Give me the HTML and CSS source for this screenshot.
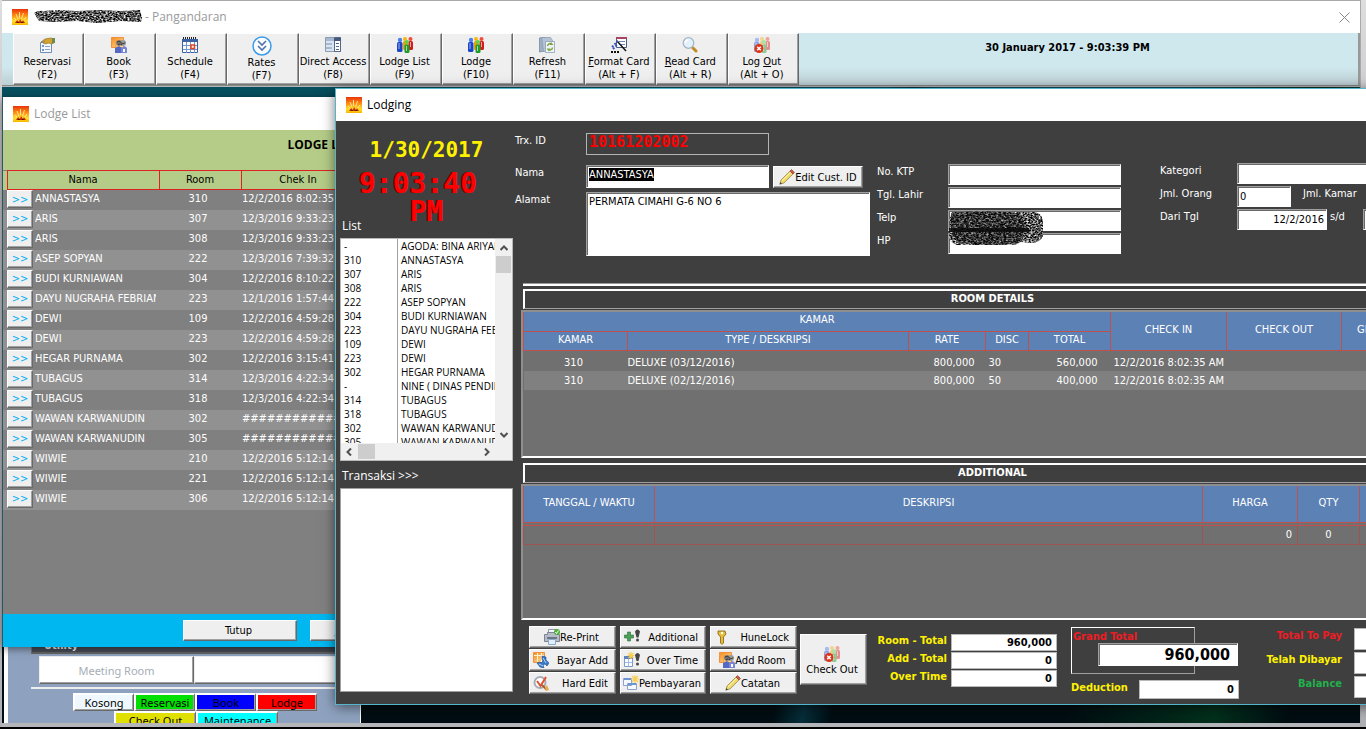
FILE: index.html
```html
<!DOCTYPE html>
<html lang="id">
<head>
<meta charset="utf-8">
<title>Pangandaran - Lodging</title>
<link rel="stylesheet" href="styles.css">
</head>
<body>
<svg class="defs" aria-hidden="true">
  <defs>
    <linearGradient id="fire" x1="0" y1="0" x2="0" y2="1"><stop offset="0" stop-color="#e8330c"/><stop offset=".4" stop-color="#ff8a10"/><stop offset=".75" stop-color="#ffe02a"/><stop offset="1" stop-color="#f8b400"/></linearGradient>
    <linearGradient id="blue" x1="0" y1="0" x2="1" y2="1"><stop offset="0" stop-color="#b8d0ee"/><stop offset="1" stop-color="#3b64ad"/></linearGradient>
    <linearGradient id="orange" x1="0" y1="0" x2="1" y2="1"><stop offset="0" stop-color="#f58a1c"/><stop offset="1" stop-color="#ffe0a0"/></linearGradient>
    <filter id="noise" x="0" y="0" width="1" height="1" color-interpolation-filters="sRGB">
      <feTurbulence type="fractalNoise" baseFrequency=".5 .7" numOctaves="3" seed="7"/>
      <feColorMatrix type="matrix" values="2.2 0 0 0 -.75  2.2 0 0 0 -.75  2.2 0 0 0 -.75  0 0 0 0 1"/>
      <feComposite in2="SourceGraphic" operator="in"/>
    </filter>
    <filter id="noise-dark" x="0" y="0" width="1" height="1" color-interpolation-filters="sRGB">
      <feTurbulence type="fractalNoise" baseFrequency=".4 .7" numOctaves="3" seed="3"/>
      <feColorMatrix type="matrix" values="1.6 0 0 0 -.62  1.6 0 0 0 -.62  1.6 0 0 0 -.62  0 0 0 0 1"/>
      <feComposite in2="SourceGraphic" operator="in"/>
    </filter>
    <symbol id="i-app" viewBox="0 0 16 16"><path fill="url(#fire)" d="M0 0h16v16H0z"/><path stroke="#fff6b0" stroke-width=".8" d="M7.5 3v6M4 5l2 5M11.500 4l-2 6M2 9l3 3M14 8l-3 4"/><path fill="#c22a00" d="M3 14l2-3 2 2 1-3 2 3 1-2 2 3z"/><path fill="#651a00" d="M5 13h2v1H5zM9 13h2v1H9z"/></symbol>
    <symbol id="i-reserve" viewBox="0 0 16 16"><path fill="#f4f8fd" stroke="#6d8db8" d="M1.500 5.500h11v10h-11z"/><path fill="#6d93cc" d="M3 8h2v2H3zM3 12h2v2H3z"/><path stroke="#8aa2c4" d="M6 9.500h5M6 12.500h5"/><path fill="#d5a32b" stroke="#8d7a3a" stroke-width=".7" d="M2 5l4-3 6-1 3 1v4l-3 1-2-1-4 1-2-1 2-2z"/><path fill="#6e8a50" d="M13 1h3v5h-3z"/></symbol>
    <symbol id="i-book" viewBox="0 0 16 16"><path fill="url(#orange)" stroke="#f09038" d="M.5.5h12v10H.5z"/><path stroke="#f7a040" d="M0 3.500h13M4.500 1v10"/><circle cx="8" cy="6" r="2.800" fill="#777"/><circle cx="12" cy="6" r="3" fill="#9a9a9a"/><path fill="none" stroke="#3d3d3d" stroke-width="1.100" d="M6 5.500q2-2.500 4 0t4 0M7 8q2-2 4 0"/><path fill="#5468c4" d="M4 11l4-2 3 2v5H4z"/><path fill="#7686da" d="M10 11l4-2 2 2v5h-6z"/><path fill="#fff" d="M12 12h2v3h-2z"/></symbol>
    <symbol id="i-calendar" viewBox="0 0 16 16"><path fill="#fff" stroke="#3c62a3" d="M.5 2.500h15v13H.5z"/><path fill="#3c62a3" d="M0 2h16v3H0z"/><path stroke="#222" stroke-dasharray="1 1" stroke-width="2" d="M1 1h14"/><path stroke="#7095d0" d="M1 8.500h14M1 12.500h14M4.500 5v11M8.500 5v11M12.500 5v11"/><path fill="#fff" stroke="#e2451e" stroke-width="1.500" d="M9 8h3.500v3.500H9z"/></symbol>
    <symbol id="i-rates" viewBox="0 0 20 20"><circle cx="10" cy="10" r="9" fill="#fafdff" stroke="#3b9ae8" stroke-width="1.500"/><path fill="none" stroke="#5272ad" stroke-width="1.600" d="M6 5l4 4 4-4M6 10l4 4 4-4"/></symbol>
    <symbol id="i-direct" viewBox="0 0 16 16"><path fill="#d9e4f3" stroke="#8c9bb0" d="M.5.5h15v14H.5z"/><path fill="#a9b9d0" d="M1 1h8v3H1zM1 6h6v2H1zM1 10h6v2H1z"/><path fill="#fff" stroke="#51688a" d="M9.500.5h6v14h-6z"/><path fill="#44597c" d="M9 1h7v3H9z"/><path stroke="#51688a" d="M11 6.500h3M11 9.500h3M11 12.500h3"/></symbol>
    <symbol id="i-people" viewBox="0 0 16 16"><circle cx="8" cy="2" r="2" fill="#f6b610"/><rect x="6" y="4" width="4.500" height="9" rx="1.500" fill="#f0a000"/><circle cx="13.500" cy="2" r="2" fill="#f04c3c"/><rect x="11.500" y="4" width="4.500" height="9" rx="1.500" fill="#d51c1c"/><circle cx="3" cy="3" r="2.200" fill="#4f80f0"/><rect x="0" y="5" width="5.500" height="10" rx="1.500" fill="#1c46c8"/><circle cx="10" cy="5" r="2.100" fill="#5bd24c"/><rect x="7.500" y="7.500" width="5" height="8.500" rx="1.500" fill="#1e9b2a"/><path stroke="#fff" stroke-opacity=".6" d="M2 6v6M9.500 9v5M13.500 5v5"/></symbol>
    <symbol id="i-leave" viewBox="0 0 16 16"><g opacity=".45"><use href="#i-people"/></g><circle cx="5" cy="11.500" r="4.500" fill="#dd3518"/><path stroke="#fff" stroke-width="1.500" d="M3.200 9.700l3.600 3.600M6.800 9.700l-3.600 3.600"/></symbol>
    <symbol id="i-refresh" viewBox="0 0 16 16"><path fill="#9fb0c4" stroke="#6a7f99" stroke-width=".7" d="M.5 1l5-1v14l-5 1z"/><path fill="#b4c2d2" stroke="#8498b0" stroke-width=".7" d="M2.500.5h9l2 3v11h-9z"/><path fill="#eef3f8" stroke="#8498b0" stroke-width=".7" d="M6.500 4.500h9v11h-9z"/><path fill="none" stroke="#7fa53a" stroke-width="1.400" d="M8.500 9a2.500 2.500 0 014-2M13.500 10.500a2.500 2.500 0 01-4 2"/><path fill="#7fa53a" d="M12 5l2.500 3h-4zM10 14.500l-2.500-3h4z"/></symbol>
    <symbol id="i-format" viewBox="0 0 16 16"><path fill="#fff" stroke="#4d5d86" d="M5.500.5h10v10h-10z"/><path fill="#a84466" d="M5 0h11v2H5z"/><path stroke="#7488b3" d="M8 4.500h6M10 7.500h4"/><path stroke="#111" stroke-width="1.500" d="M6 4l9 10"/><path stroke="#3d57ba" stroke-width="2" stroke-dasharray="2 1.500" d="M1 10l6-6M2 12l4-4"/><path stroke="#111" stroke-width="2" stroke-dasharray="2 1" d="M0 15h9"/></symbol>
    <symbol id="i-lens" viewBox="0 0 16 16"><path stroke="#c08a24" stroke-width="3" stroke-linecap="round" d="M11 11l3 3"/><circle cx="6.500" cy="6" r="5.300" fill="#e2f1fb" stroke="#a3b4c3" stroke-width="1.200"/><path fill="none" stroke="#fff" stroke-width="1.500" d="M3.500 6a3 3 0 013-3"/></symbol>
    <symbol id="i-pencil" viewBox="0 0 16 16"><path fill="#efd768" stroke="#8d8048" stroke-width=".7" d="M1 15l1-4L11 2l3 3-9 9z"/><path stroke="#fff6b5" d="M3 12l8.500-8.500"/><path fill="#cf5650" stroke="#8a3530" stroke-width=".6" d="M11 2l1.500-1.500 3 3L14 5z"/><path fill="#444" d="M.5 15.500l.8-2.500 1.700 1.700z"/></symbol>
    <symbol id="i-print" viewBox="0 0 16 16"><path fill="#f5f7fa" stroke="#8d97a8" d="M4.500.5h8v6h-8z"/><path fill="#b5bcc8" stroke="#7d8592" d="M.5 5.500h3v-2h10v2h2v7H.5z"/><path fill="#6d7685" d="M3 8h10v2H3z"/><path fill="#e2eefb" stroke="#8caacb" d="M4.500 10.500h7v5h-7z"/><circle cx="13" cy="3" r="3" fill="#4fae3c"/><path fill="none" stroke="#fff" d="M11.500 3l1 1.500 2-3"/></symbol>
    <symbol id="i-addnote" viewBox="0 0 16 16"><path fill="#4aa15a" stroke="#2c6b38" stroke-width=".6" d="M3.500 3h3v3h3v3h-3v3h-3V9H.5V6h3z"/><path fill="#444" d="M11 2.500q2.500-4 5 0l-1.500 6h-2z"/><circle cx="13.500" cy="11" r="1.500" fill="#444"/></symbol>
    <symbol id="i-over" viewBox="0 0 16 16"><path fill="#fff" stroke="#7d9bcc" d="M.5 4.500h8v10h-8z"/><path fill="#5f83bd" d="M0 4h9v3H0z"/><path stroke="#9fbae4" d="M1 10.500h7M4.500 7v7"/><path stroke="#f6cf50" stroke-width="1.200" d="M7 0v7M3.500 3.500h7M4.500 1l5 5M9.500 1l-5 5"/><path fill="#444" d="M11 3q2.500-4 5 0l-1.500 6h-2z"/><circle cx="13.500" cy="12" r="1.500" fill="#444"/></symbol>
    <symbol id="i-key" viewBox="0 0 16 16"><path fill="#e8bd35" stroke="#7e5f11" stroke-width=".8" d="M4 2h7l1 3-2.500 3v6L8 15.500 6.500 14V8L4 5z"/><circle cx="8" cy="4" r="1.200" fill="#fff"/></symbol>
    <symbol id="i-pay" viewBox="0 0 16 16"><path fill="url(#orange)" stroke="#f09038" d="M.5.5h11v10H.5z"/><path stroke="#fff3d5" d="M4.500 1v9M8.500 1v9M1 3.500h10"/><path fill="#3979c9" stroke="#1d4f97" stroke-width=".6" d="M9 4l4 1v3l3 3-2 3-2-2-2 1 1 3-4-1-3-4 3-1 1 1 2-2-1-2z"/><path stroke="#b7d5f5" d="M10 6l3 5M6 12l4 2"/></symbol>
    <symbol id="i-edit" viewBox="0 0 16 16"><circle cx="7" cy="7.500" r="5.500" fill="#fff" stroke="#a7adb6" stroke-width="2"/><path fill="none" stroke="#e05132" stroke-width="2" d="M4 6l3.500 5L13 2"/><path stroke="#a85f24" stroke-width="2" d="M9 10l5 5"/><path fill="#e9ad55" d="M12 12l2-2 2 5-3 1z"/></symbol>
    <symbol id="i-cash" viewBox="0 0 16 16"><path fill="#f5faff" stroke="#8ba3cd" d="M.5 3.500h8v7h-8zM4.500 8.500h9v6h-9z"/><path stroke="#6f94d5" stroke-width="2" d="M1 4h7M5 9h8"/><path stroke="#f6cf50" stroke-width="1.200" d="M12 0v8M8 4h8M9 1l6 6M15 1L9 7"/></symbol>
    <symbol id="i-close" viewBox="0 0 11 11"><path stroke="#888" d="M.5.5l10 10M10.500.5l-10 10"/></symbol>
    <symbol id="i-chev" viewBox="0 0 8 6"><path fill="none" stroke="#505050" stroke-width="2" d="M.5 5L4 1.500 7.500 5"/></symbol>
  </defs>
</svg>

<div class="desktop">
  <div class="behind"></div>

  <section class="main-window">
    <header class="titlebar titlebar-main">
      <svg class="app-icon"><use href="#i-app"/></svg>
      <svg class="redact"><path filter="url(#noise)" d="M0 4q4-3 10-2l12-1 20 1 24-1 20 1 20-1 2 8-1 4-20-1-24 2-20-2-24 1-14-1z"/></svg>
      <span>- Pangandaran</span>
      <button class="close" aria-label="Close"><svg><use href="#i-close"/></svg></button>
    </header>
    <div class="toolbar">
      <nav class="tools">
        <button><svg><use href="#i-reserve"/></svg>Reservasi<br>(F2)</button>
        <button><svg><use href="#i-book"/></svg>Book<br>(F3)</button>
        <button><svg><use href="#i-calendar"/></svg>Schedule<br>(F4)</button>
        <button><svg class="large"><use href="#i-rates"/></svg>Rates<br>(F7)</button>
        <button><svg><use href="#i-direct"/></svg>Direct Access<br>(F8)</button>
        <button><svg><use href="#i-people"/></svg>Lodge List<br>(F9)</button>
        <button><svg><use href="#i-people"/></svg>Lodge<br>(F10)</button>
        <button><svg><use href="#i-refresh"/></svg>Refresh<br>(F11)</button>
        <button><svg><use href="#i-format"/></svg><u>F</u>ormat Card<br>(Alt + F)</button>
        <button><svg><use href="#i-lens"/></svg><u>R</u>ead Card<br>(Alt + R)</button>
        <button><svg><use href="#i-leave"/></svg>Log <u>O</u>ut<br>(Alt + O)</button>
      </nav>
      <div class="now">30 January 2017 - 9:03:39 PM</div>
    </div>
    <div class="mdi"></div>
  </section>

  <section class="room-map">
    <div class="map-inner">
      <div class="map-head">Utility</div>
      <div class="meeting"><button disabled>Meeting Room</button><button aria-label="Empty room"></button></div>
      <div class="legend">
        <button class="kosong">Kosong</button><button class="reservasi">Reservasi</button><button class="book">Book</button><button class="lodge">Lodge</button>
      </div>
      <div class="legend legend-two">
        <button class="checkout">Check Out</button><button class="maint">Maintenance</button>
      </div>
    </div>
  </section>

  <section class="lodge-list">
    <header class="titlebar"><svg class="app-icon"><use href="#i-app"/></svg><span>Lodge List</span></header>
    <div class="list-body">
      <h1>LODGE LIST</h1>
      <table>
        <colgroup><col class="c-edge"><col class="c-go"><col class="c-name"><col class="c-room"><col class="c-in"><col></colgroup>
        <thead><tr><td></td><th colspan="2">Nama</th><th>Room</th><th>Chek In</th><th></th></tr></thead>
        <tbody>
          <tr><td></td><td><button>&gt;&gt;</button></td><td><div>ANNASTASYA</div></td><td>310</td><td>12/2/2016 8:02:35</td><td></td></tr>
          <tr><td></td><td><button>&gt;&gt;</button></td><td><div>ARIS</div></td><td>307</td><td>12/3/2016 9:33:23</td><td></td></tr>
          <tr><td></td><td><button>&gt;&gt;</button></td><td><div>ARIS</div></td><td>308</td><td>12/3/2016 9:33:23</td><td></td></tr>
          <tr><td></td><td><button>&gt;&gt;</button></td><td><div>ASEP SOPYAN</div></td><td>222</td><td>12/3/2016 7:39:32</td><td></td></tr>
          <tr><td></td><td><button>&gt;&gt;</button></td><td><div>BUDI KURNIAWAN</div></td><td>304</td><td>12/2/2016 8:10:22</td><td></td></tr>
          <tr><td></td><td><button>&gt;&gt;</button></td><td><div>DAYU NUGRAHA FEBRIAN</div></td><td>223</td><td>12/1/2016 1:57:44</td><td></td></tr>
          <tr><td></td><td><button>&gt;&gt;</button></td><td><div>DEWI</div></td><td>109</td><td>12/2/2016 4:59:28</td><td></td></tr>
          <tr><td></td><td><button>&gt;&gt;</button></td><td><div>DEWI</div></td><td>223</td><td>12/2/2016 4:59:28</td><td></td></tr>
          <tr><td></td><td><button>&gt;&gt;</button></td><td><div>HEGAR PURNAMA</div></td><td>302</td><td>12/2/2016 3:15:41</td><td></td></tr>
          <tr><td></td><td><button>&gt;&gt;</button></td><td><div>TUBAGUS</div></td><td>314</td><td>12/3/2016 4:22:34</td><td></td></tr>
          <tr><td></td><td><button>&gt;&gt;</button></td><td><div>TUBAGUS</div></td><td>318</td><td>12/3/2016 4:22:34</td><td></td></tr>
          <tr><td></td><td><button>&gt;&gt;</button></td><td><div>WAWAN KARWANUDIN</div></td><td>302</td><td>############</td><td></td></tr>
          <tr><td></td><td><button>&gt;&gt;</button></td><td><div>WAWAN KARWANUDIN</div></td><td>305</td><td>############</td><td></td></tr>
          <tr><td></td><td><button>&gt;&gt;</button></td><td><div>WIWIE</div></td><td>210</td><td>12/2/2016 5:12:14</td><td></td></tr>
          <tr><td></td><td><button>&gt;&gt;</button></td><td><div>WIWIE</div></td><td>221</td><td>12/2/2016 5:12:14</td><td></td></tr>
          <tr><td></td><td><button>&gt;&gt;</button></td><td><div>WIWIE</div></td><td>306</td><td>12/2/2016 5:12:14</td><td></td></tr>
        </tbody>
      </table>
    </div>
    <footer><button>Tutup</button><button aria-label="Edit"><svg class="ico"><use href="#i-pencil"/></svg></button></footer>
  </section>

  <section class="lodging">
    <header class="titlebar"><svg class="app-icon"><use href="#i-app"/></svg><span>Lodging</span></header>
    <div class="lodging-body">
      <aside>
        <div class="clock"><div class="date">1/30/2017</div><div class="time">9:03:40</div><div class="time ampm">PM</div></div>
        <div class="caption">List</div>
        <div class="listbox">
          <div class="entries">
            <ul class="rooms"><li>-<li>310<li>307<li>308<li>222<li>304<li>223<li>109<li>223<li>302<li>-<li>314<li>318<li>302<li>305</ul>
            <ul class="names"><li>AGODA: BINA ARIYANTO<li>ANNASTASYA<li>ARIS<li>ARIS<li>ASEP SOPYAN<li>BUDI KURNIAWAN<li>DAYU NUGRAHA FEBRIAN<li>DEWI<li>DEWI<li>HEGAR PURNAMA<li>NINE ( DINAS PENDIDIKAN<li>TUBAGUS<li>TUBAGUS<li>WAWAN KARWANUDIN<li>WAWAN KARWANUDIN</ul>
            <div class="vbar"><svg><use href="#i-chev"/></svg><i></i><svg class="down"><use href="#i-chev"/></svg></div>
          </div>
          <div class="hbar"><svg class="left"><use href="#i-chev"/></svg><i></i><svg class="right"><use href="#i-chev"/></svg></div>
        </div>
        <div class="caption transaksi">Transaksi &gt;&gt;&gt;</div>
        <div class="transbox"></div>
      </aside>

      <main>
        <form class="guest">
          <div class="who">
            <label for="trx">Trx. ID</label><input id="trx" class="trx" value="10161202002" readonly>
            <label for="nama">Nama</label><div class="field"><span class="selected">ANNASTASYA</span><input id="nama" aria-label="Nama"></div>
            <button type="button"><svg class="ico"><use href="#i-pencil"/></svg>Edit Cust. ID</button>
            <label for="alamat">Alamat</label><textarea id="alamat">PERMATA CIMAHI G-6 NO 6</textarea>
          </div>
          <div class="contact">
            <label for="ktp">No. KTP</label><input id="ktp">
            <label for="lahir">Tgl. Lahir</label><input id="lahir">
            <label for="telp">Telp</label><input id="telp">
            <label for="hp">HP</label><input id="hp">
            <svg class="smudge" viewBox="0 0 94 36"><path filter="url(#noise)" d="M3 2h82q8 1 9 9v15q-3 7-12 7l-10-1-6 3H8q-8-3-8-9l2-7-2-8z"/><path filter="url(#noise-dark)" opacity=".85" d="M2 3q35-4 70 1l4 15-6 14q-34 4-62-1l-6-12z"/><path stroke="#0a0a0a" stroke-width="4" opacity=".85" d="M0 20h80"/></svg>
          </div>
          <div class="stay">
            <label for="kat">Kategori</label><div><input id="kat" class="wide"></div>
            <label for="orang">Jml. Orang</label><div><input id="orang" class="short" value="0"><label class="kamar" for="jkamar">Jml. Kamar</label><input id="jkamar" class="short"></div>
            <label for="dari">Dari Tgl</label><div><input id="dari" class="mid" value="12/2/2016"><label class="sd" for="sampai">s/d</label><input id="sampai" class="mid"></div>
          </div>
        </form>

        <h2>ROOM DETAILS</h2>
        <div class="frame frame-room">
          <table class="room">
            <colgroup><col class="r1"><col class="r2"><col class="r3"><col class="r4"><col class="r5"><col class="r6"><col class="r7"><col></colgroup>
            <thead>
              <tr><th colspan="5">KAMAR</th><th rowspan="2">CHECK IN</th><th rowspan="2">CHECK OUT</th><th rowspan="2" class="cut">GRAND TOTAL</th></tr>
              <tr><th>KAMAR</th><th>TYPE / DESKRIPSI</th><th>RATE</th><th>DISC</th><th>TOTAL</th></tr>
            </thead>
            <tbody>
              <tr><td class="mid">310</td><td>DELUXE (03/12/2016)</td><td class="num">800,000</td><td>30</td><td class="num">560,000</td><td>12/2/2016 8:02:35 AM</td><td></td><td></td></tr>
              <tr><td class="mid">310</td><td>DELUXE (02/12/2016)</td><td class="num">800,000</td><td>50</td><td class="num">400,000</td><td>12/2/2016 8:02:35 AM</td><td></td><td></td></tr>
            </tbody>
          </table>
        </div>

        <h2>ADDITIONAL</h2>
        <div class="frame frame-add">
          <table class="add">
            <colgroup><col class="a1"><col><col class="a3"><col class="a4"><col class="a5"></colgroup>
            <thead><tr><th>TANGGAL / WAKTU</th><th>DESKRIPSI</th><th>HARGA</th><th>QTY</th><th></th></tr></thead>
            <tbody><tr><td></td><td></td><td class="num">0</td><td class="mid">0</td><td></td></tr></tbody>
          </table>
        </div>

        <div class="actions">
          <div class="buttons">
            <button><svg class="ico"><use href="#i-print"/></svg>Re-Print</button>
            <button class="spread"><svg class="ico"><use href="#i-addnote"/></svg>Additional</button>
            <button class="spread"><svg class="ico"><use href="#i-key"/></svg>HuneLock</button>
            <button class="spread"><svg class="ico"><use href="#i-pay"/></svg>Bayar Add</button>
            <button class="spread"><svg class="ico"><use href="#i-over"/></svg>Over Time</button>
            <button><svg class="ico"><use href="#i-book"/></svg>Add Room</button>
            <button class="spread"><svg class="ico"><use href="#i-edit"/></svg>Hard Edit</button>
            <button><svg class="ico"><use href="#i-cash"/></svg>Pembayaran</button>
            <button><svg class="ico"><use href="#i-pencil"/></svg>Catatan</button>
          </div>
          <button class="out"><svg class="ico"><use href="#i-leave"/></svg>Check Out</button>
          <div class="totals">
            <label for="rt">Room - Total</label><input id="rt" value="960,000">
            <label for="at">Add - Total</label><input id="at" value="0">
            <label for="ot">Over Time</label><input id="ot" value="0">
          </div>
          <div class="grand">
            <div class="grand-box"><label for="gt">Grand Total</label><input id="gt" value="960,000"></div>
            <div class="deduct"><label for="dd">Deduction</label><input id="dd" value="0"></div>
          </div>
          <div class="pay">
            <label for="tp" class="red">Total To Pay</label><input id="tp">
            <label for="td">Telah Dibayar</label><input id="td">
            <label for="bl" class="green">Balance</label><input id="bl">
          </div>
        </div>
      </main>
    </div>
  </section>
</div>
</body>
</html>
```
FILE: styles.css
```css
* { box-sizing: border-box; }
body { margin: 0; overflow: hidden; font: 11px/13px "DejaVu Sans Condensed", "Noto Sans", sans-serif; color: #000; }
button, input, textarea { font: inherit; color: inherit; margin: 0; padding: 0; border-radius: 0; }
h1, h2, ul { margin: 0; padding: 0; }
ul { list-style: none; }
table { border-collapse: collapse; table-layout: fixed; width: 100%; }
th { font-weight: normal; }
th, td { padding: 0; overflow: hidden; white-space: nowrap; }
.defs { position: absolute; width: 0; height: 0; }
button { background: #efefef; border: 1px solid; border-color: #fff #696969 #696969 #fff; box-shadow: inset -1px -1px #a0a0a0; white-space: nowrap; }
input, textarea { background: #fff; border: 1px solid; border-color: #a0a0a0 #fff #fff #a0a0a0; box-shadow: inset 1px 1px #696969; outline: 0; min-width: 0; padding-left: 2px; }
.ico { width: 16px; height: 16px; flex: none; }

/* Desktop and main window */
.desktop { position: relative; height: 100vh; min-height: 729px; overflow: hidden; background: #000; }
.behind { position: absolute; inset: 0 0 2px; background: linear-gradient(#dedede, #c8c8cc 130px, #aeb0b4); }
.main-window { position: absolute; inset: 0 5px 2px 2px; display: flex; flex-direction: column; background: #b4b6ba; border-top: 1px solid #a9a9a9; border-right: 1px solid #a9a9a9; }
.titlebar { display: flex; align-items: center; height: 33px; padding-left: 10px; background: #fff; font: 12px/16px "Open Sans", "Noto Sans", sans-serif; color: #9a9a9a; flex: none; }
.titlebar-main { height: 32px; }
.app-icon { width: 16px; height: 16px; margin-right: 6px; }
.redact { width: 108px; height: 16px; margin-right: 3px; }
.close { margin-left: auto; margin-right: 10px; width: 11px; height: 11px; border: 0; box-shadow: none; background: none; display: flex; }
.close svg { width: 11px; height: 11px; }
.toolbar { display: flex; height: 53px; flex: none; padding-left: 11px; background: linear-gradient(#cfe8ed 65%, #bccfd4); border-bottom: 1px solid #888; border-right: 2px solid #999; }
.tools { display: flex; flex: none; width: 786px; }
.tools button { flex: 1 1 0; height: 52px; display: block; text-align: center; line-height: 13px; padding-right: 3px; border-bottom: 1px solid #777; }
.tools svg { display: block; width: 16px; height: 16px; margin: 0 auto 2px; }
.tools svg.large { width: 20px; height: 20px; margin-bottom: 0; }
.now { flex: 1; text-align: center; padding-top: 8px; padding-right: 22px; font-weight: bold; }
.mdi { flex: 1; margin: 1px 0 4px; background: linear-gradient(100deg, transparent 60%, #062e3a 62%, transparent 64%, transparent 80%, #02301c 90%, transparent 95%), linear-gradient(#07505f, #05323d 30%, #000d12 90%); }

/* Room map */
.room-map { position: absolute; left: 4px; top: 97px; width: 357px; bottom: 6px; overflow: hidden; padding-left: 4px; background: #fff; border-right: 1px solid #fff; }
.map-inner { height: 100%; background: #8ea2bf; padding: 539px 0 0 23px; }
.map-head { height: 18px; line-height: 18px; padding-left: 12px; background: #484c56; border: 1px solid #777; border-bottom: 2px solid #666; color: #fff; font-weight: bold; }
.meeting { display: flex; padding: 2px 0 3px 8px; border-bottom: 2px solid #eee; height: 35px; font-family: "Noto Sans", sans-serif; }
.meeting button { width: 155px; height: 28px; background: #fff; border-color: #eee #696969 #696969 #eee; color: #a5adb6; }
.legend { display: flex; padding: 4px 0 0 42px; font: 11px/15px "Noto Sans", sans-serif; }
.legend button { width: 61px; height: 18px; border-top-width: 2px; border-left-width: 2px; }
.legend-two { padding: 0 0 0 83px; }
.legend-two button { width: 82px; height: 18px; }
.legend .kosong { background: #f0f8ff; }
.legend .reservasi { background: #00e000; }
.legend .book { background: #00f; }
.legend .lodge { background: #f00; }
.legend .checkout { background: #e0e000; }
.legend .maint { background: #0ff; }

/* Lodge list */
.lodge-list { position: absolute; left: 2px; top: 97px; width: 638px; border-left: 1px solid #28566b; background: #808080; box-shadow: 0 2px 8px rgba(0,0,0,.5); }
.lodge-list .app-icon { margin-right: 5px; }
.list-body { height: 484px; }
.list-body h1 { height: 40px; padding-top: 6px; background: #b5cc88; font: bold 12px/18px "Open Sans", "Noto Sans", sans-serif; text-align: center; }
.c-edge { width: 4px; }
.c-go { width: 26px; }
.c-name { width: 126px; }
.c-room { width: 82px; }
.c-in { width: 114px; }
.lodge-list thead { background: #b5cc88; }
.lodge-list thead tr { height: 19px; }
.lodge-list th { border: 1px solid #dd2222; padding-bottom: 1px; }
.lodge-list tbody tr { height: 20px; color: #fff; }
.lodge-list tbody tr:nth-child(even) { background: #919191; }
.lodge-list tbody button { display: block; width: 26px; height: 18px; color: #00b0f0; line-height: 15px; }
.lodge-list tbody td { padding-bottom: 3px; }
.lodge-list tbody td:nth-child(2) { padding: 0; vertical-align: top; }
.lodge-list tbody td:nth-child(3) { padding-left: 2px; }
.lodge-list tbody td div { width: 121px; overflow: hidden; }
.lodge-list tbody td:nth-child(4) { text-align: center; padding-right: 4px; }
.lodge-list tbody td:nth-child(5) { padding-left: 1px; }
.lodge-list footer { display: flex; gap: 13px; height: 33px; padding: 6px 0 0 180px; background: #00b7f0; }
.lodge-list footer button { width: 114px; height: 21px; padding: 0 3px 0 0; text-align: center; }
.lodge-list footer button + button { text-align: left; padding: 0 0 0 23px; }

/* Lodging window */
.lodging { position: absolute; left: 335px; top: 88px; right: -104px; border: 1px solid #55b6cb; background: #3f3f3f; color: #fff; box-shadow: 0 2px 12px rgba(0,0,0,.55); }
.lodging .titlebar { height: 32px; color: #000; }
.lodging .app-icon { margin-right: 5px; }
.lodging button, .lodging input, .lodging textarea { color: #000; }
.lodging-body { display: flex; padding-left: 4px; }
aside { width: 173px; flex: none; margin-right: 2px; }
.clock { height: 97px; font-family: "DejaVu Sans Mono", monospace; font-weight: bold; text-align: center; padding-top: 18px; }
.date { font-size: 21px; line-height: 22px; color: #fff200; }
.time { margin-top: 9px; padding-right: 17px; font-size: 28px; line-height: 28px; color: #f00; text-shadow: -1px 0 #600; }
.ampm { margin-top: 0; padding-right: 0; }
.caption { height: 20px; line-height: 15px; padding-left: 2px; font-family: "Open Sans", sans-serif; font-size: 12px; }
.listbox { height: 223px; background: #fff; border: 1px solid #b8b8b8; display: flex; flex-direction: column; color: #000; }
.entries { flex: 1; min-height: 0; display: flex; overflow: hidden; font: 10px/14px "Open Sans", "Noto Sans", sans-serif; }
.rooms { width: 57px; padding-left: 3px; border-right: 1px solid #a0a0a0; flex: none; }
.names { flex: 1; min-width: 0; overflow: hidden; padding-left: 3px; white-space: nowrap; }
.vbar { width: 17px; background: #f0f0f0; display: flex; flex-direction: column; align-items: center; padding: 6px 0 5px; }
.vbar svg, .hbar svg { width: 8px; height: 6px; flex: none; }
.vbar i { width: 15px; height: 17px; margin: 5px 0 auto; background: #cdcdcd; }
.down { transform: rotate(180deg); }
.hbar { height: 17px; display: flex; align-items: center; padding: 0 21px 0 4px; background: #f0f0f0; }
.hbar i { width: 17px; height: 15px; margin: 0 auto 0 5px; background: #cdcdcd; }
.left { transform: rotate(-90deg); }
.right { transform: rotate(90deg); }
.transaksi { height: 27px; padding-top: 7px; }
.transbox { height: 204px; background: #fff; border: 1px solid #a0a0a0; }

main { flex: 1; min-width: 0; padding-right: 7px; }
.guest { display: flex; height: 165px; padding-top: 12px; position: relative; }
.guest::after { content: ""; position: absolute; left: 8px; right: 0; bottom: 0; height: 2px; background: #fff; border-top: 1px solid #999; }
.who { display: grid; grid-template-columns: 71px 183px 97px; grid-template-rows: 28px 23px 64px; row-gap: 4px; height: 123px; margin-right: 11px; }
.who label { line-height: 16px; }
.who .trx { grid-column: 2 / 4; width: 183px; height: 22px; background: transparent; border-color: #b4b4b4; box-shadow: none; color: #f00; font: bold 15px/14px "DejaVu Sans Mono", monospace; padding-bottom: 4px; }
.who button { width: 90px; height: 22px; margin: 1px 0 0 4px; display: flex; align-items: center; justify-content: center; }
.field { position: relative; display: grid; }
.selected { position: absolute; left: 3px; top: 3px; background: #000; color: #fff; }
.who textarea { grid-column: 2 / 4; width: 284px; height: 64px; resize: none; padding: 2px; }
.contact { position: relative; display: grid; grid-template-columns: 71px 173px; grid-auto-rows: 21px; row-gap: 2px; align-content: start; padding-top: 31px; margin-right: 39px; line-height: 16px; }
.smudge { position: absolute; left: 72px; top: 77px; width: 94px; height: 36px; }
.stay { display: grid; grid-template-columns: 77px 225px; grid-auto-rows: 21px; row-gap: 2px; align-content: start; padding-top: 30px; line-height: 16px; }
.stay div { display: flex; }
.stay .wide { flex: 1; }
.stay .short { width: 54px; }
.stay .mid { width: 90px; text-align: right; padding-right: 2px; flex: none; }
.stay .kamar { margin: 0 10px 0 12px; }
.stay .sd { width: 36px; padding-left: 3px; flex: none; }

h2 { margin: 3px 0 1px 8px; height: 20px; border: 2px solid #fff; border-bottom: 1px solid #a0a0a0; font: bold 11px/15px "DejaVu Sans Condensed", sans-serif; text-align: center; }
.frame { margin-left: 6px; background: #707070; border: 2px solid; border-color: #8e8e8e #fff #fff #8e8e8e; }
.frame-room { height: 148px; margin-bottom: 5px; }
.frame-add { height: 136px; }
.frame th { background: #5c81b5; border: 1px solid #c0504d; padding-bottom: 2px; line-height: 12px; }
.frame thead tr:first-child th { border-top: 0; }
.r1 { width: 104px; }
.r2 { width: 281px; }
.r3 { width: 77px; }
.r4 { width: 43px; }
.r5 { width: 82px; }
.r6 { width: 116px; }
.r7 { width: 115px; }
.room tr { height: 19px; }
.room tbody tr:first-child { height: 21px; }
.room tbody tr:first-child td { padding-top: 3px; }
.room tbody tr:nth-child(even) { background: #808080; }
.room .cut { text-align: left; padding-left: 15px; }
.frame .mid { text-align: center; padding-right: 4px; }
.add .mid { padding-right: 0; }
.frame .num { text-align: right; padding-right: 11px; }
.room td:nth-child(4), .room td:nth-child(6) { padding-left: 3px; }
.room td.num:nth-child(5) { padding-right: 13px; }
.a1 { width: 131px; }
.a3 { width: 95px; }
.a4 { width: 62px; }
.a5 { width: 100px; }
.add th { height: 38px; }
.add thead { border-bottom: 4px double #c0504d; }
.add tbody td { height: 20px; border: 1px solid #9c5553; }
.add td.num { padding-right: 5px; }

.actions { display: flex; padding: 6px 0 0 14px; height: 84px; }
.buttons { display: grid; grid-template-columns: 87px 86px 87px; grid-auto-rows: 22px; gap: 1px 4px; align-content: start; }
.buttons button { display: flex; align-items: center; justify-content: center; padding-right: 2px; }
.buttons .spread { justify-content: space-between; padding: 0 7px 0 3px; }
.out { width: 67px; height: 51px; margin: 8px 4px 0 3px; padding-right: 3px; }
.out svg { display: block; margin: 2px auto 1px; }
.totals { display: grid; grid-template-columns: 76px 106px; column-gap: 4px; grid-auto-rows: 18px; margin: 8px 14px 0 0; align-content: start; font-weight: bold; color: #fff200; text-align: right; }
.totals input { height: 17px; text-align: right; padding-right: 4px; border-color: #b8b8b8; box-shadow: none; }
.grand { width: 168px; font-weight: bold; color: #fff200; padding-top: 1px; }
.grand-box { position: relative; width: 124px; height: 47px; border: 1px solid; border-color: #fff #a0a0a0 #a0a0a0 #fff; padding: 2px 1px; color: #ed1c24; }
.grand-box input { position: absolute; left: 26px; top: 15px; width: 140px; height: 23px; text-align: right; font-size: 16px; padding-right: 7px; }
.deduct { display: flex; justify-content: space-between; margin-top: 6px; line-height: 15px; }
.deduct input { width: 100px; height: 19px; text-align: right; padding-right: 4px; border-color: #b8b8b8; box-shadow: none; }
.pay { flex: 1; display: grid; grid-template-columns: 103px 1fr; column-gap: 12px; grid-auto-rows: 24px; padding-top: 2px; font-weight: bold; text-align: right; color: #fff200; line-height: 15px; }
.pay input { height: 22px; border-color: #b8b8b8; box-shadow: none; }
.pay .red { color: #ed1c24; }
.pay .green { color: #22b14c; }
```
